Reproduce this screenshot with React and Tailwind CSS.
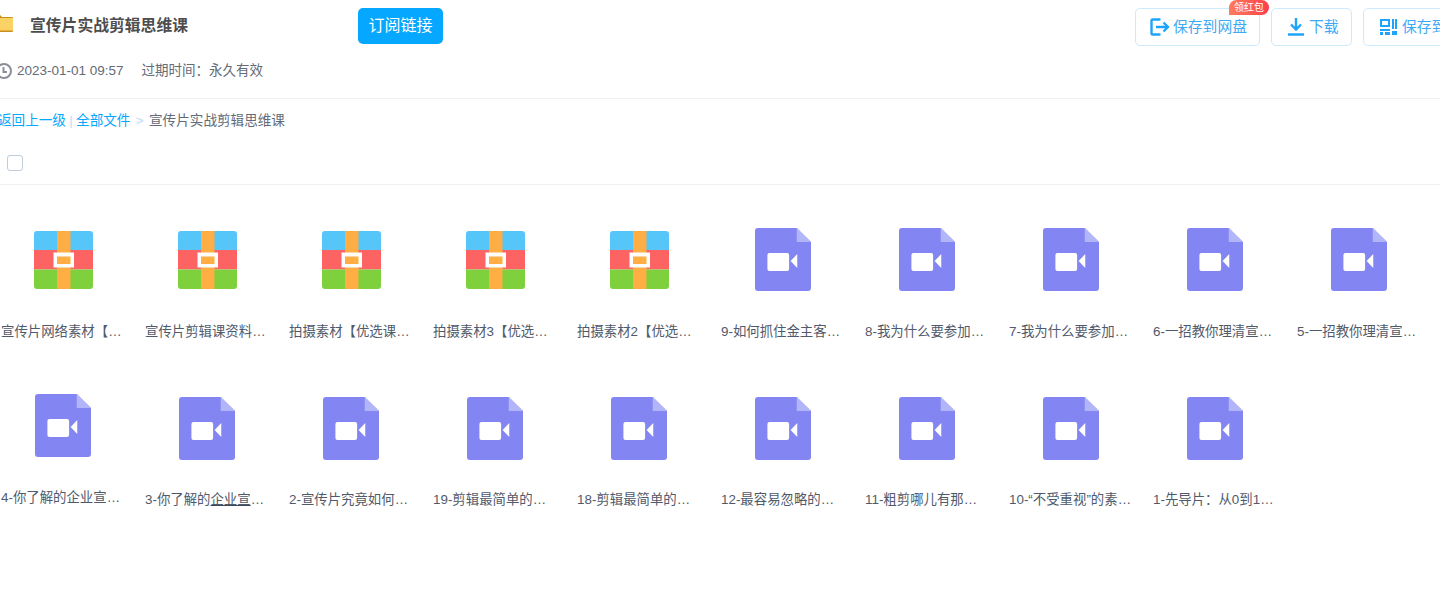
const row1 = [
  { type: 'zip', name: '宣传片网络素材【优选课程】' },
  { type: 'zip', name: '宣传片剪辑课资料包合集' },
  { type: 'zip', name: '拍摄素材【优选课程资源】' },
  { type: 'zip', name: '拍摄素材3【优选课程资源】' },
  { type: 'zip', name: '拍摄素材2【优选课程资源】' },
  { type: 'video', name: '9-如何抓住金主客户的心理' },
  { type: 'video', name: '8-我为什么要参加这个课程' },
  { type: 'video', name: '7-我为什么要参加这个课程' },
  { type: 'video', name: '6-一招教你理清宣传片思路' },
  { type: 'video', name: '5-一招教你理清宣传片思路' },
]

const row2 = [
  { type: 'video', tight: true, name: '4-你了解的企业宣传片是什么', lift: true },
  { type: 'video', tight: true, name: '3-你了解的', underlined: '企业宣', rest: '传片是什么' },
  { type: 'video', tight: true, name: '2-宣传片究竟如何去策划' },
  { type: 'video', tight: true, name: '19-剪辑最简单的方法与技巧' },
  { type: 'video', tight: true, name: '18-剪辑最简单的方法与技巧' },
  { type: 'video', tight: true, name: '12-最容易忽略的细节问题' },
  { type: 'video', tight: true, name: '11-粗剪哪儿有那么简单呢' },
  { type: 'video', tight: true, name: '10-“不受重视”的素材整理' },
  { type: 'video', tight: true, name: '1-先导片：从0到1学会剪辑' },
]

function ZipIcon() {
  return (
    <svg width="59" height="58" viewBox="0 0 59 58" className="ml-px mt-[3px] block">
      <path d="M3 0h53a3 3 0 0 1 3 3v16H0V3a3 3 0 0 1 3-3z" fill="#56c5f7" />
      <rect y="19" width="59" height="19.500" fill="#fe6363" />
      <path d="M0 38.500h59V55a3 3 0 0 1-3 3H3a3 3 0 0 1-3-3z" fill="#7fd03d" />
      <rect x="23" width="13.500" height="58" fill="#feae42" />
      <rect x="19.500" y="21.500" width="20.500" height="15" fill="#fff" />
      <rect x="23" y="25.500" width="13.500" height="7.500" fill="#feae42" />
    </svg>
  )
}

function VideoIcon() {
  return (
    <svg width="56" height="63" viewBox="0 0 55 63" preserveAspectRatio="none" className="block">
      <path d="M3 0h38l14 14v46a3 3 0 0 1-3 3H3a3 3 0 0 1-3-3V3a3 3 0 0 1 3-3z" fill="#8386f2" />
      <path d="M41 0l14 14H41z" fill="#b3b5f9" />
      <rect x="12.200" y="25" width="21.300" height="18" rx="2" fill="#fff" />
      <path d="M35 33l6.500-7v14z" fill="#fff" />
    </svg>
  )
}

function FileItem({ type, name, underlined, rest, lift, tight }) {
  return (
    <div className="flex w-[144px] shrink-0 flex-col items-center">
      <div className={`flex h-[63px] w-full items-start justify-center ${lift ? '-translate-y-[3px]' : ''}`}>
        {type === 'zip' ? <ZipIcon /> : <VideoIcon />}
      </div>
      <p
        className={`w-[124px] truncate text-[13.4px] leading-[20px] text-[#505a6b] ${tight ? 'mt-[30px]' : 'mt-[31px]'} ${lift ? '-translate-y-[2px]' : ''}`}
      >
        {name}
        {underlined ? <span className="underline decoration-[#3f4a5c]">{underlined}</span> : null}
        {rest}
      </p>
    </div>
  )
}

function ActionButton({ icon, label, className }) {
  return (
    <button className={`flex h-[38px] shrink-0 items-center rounded-[5px] border border-[#cdeafe] bg-white text-[14.8px] text-[#3fa9f5] ${className}`}>
      {icon}
      <span className="whitespace-nowrap">{label}</span>
    </button>
  )
}

export default function App() {
  return (
    <div
      className="h-[591px] w-[1440px] overflow-hidden bg-white"
      style={{ fontFamily: '"Liberation Sans", "Noto Sans CJK SC", sans-serif' }}
    >
      <header className="h-[99px] border-b border-[#f0f2f5]">
        <div className="flex h-[54px] items-start">
          <svg width="20" height="17" viewBox="0 0 20 17" className="ml-[-7px] mt-[15px] shrink-0">
            <path d="M1 0h6l2 2h10a1 1 0 0 1 1 1v13a1 1 0 0 1-1 1H1a1 1 0 0 1-1-1V1a1 1 0 0 1 1-1z" fill="#c98f1f" />
            <path d="M0 3h20v12.500H0z" fill="#fbd365" />
          </svg>
          <h1 className="ml-[17px] mt-[15px] whitespace-nowrap text-[15.8px] font-bold leading-[22px] text-[#4d4d4d]">
            宣传片实战剪辑思维课
          </h1>
          <button className="ml-[170px] mt-[8px] h-[36px] w-[85px] shrink-0 rounded-[5px] bg-[#06a7ff] text-[16px] text-white">
            订阅链接
          </button>

          <div className="relative ml-[692px] mt-[8px] flex shrink-0 gap-[11px]">
            <span className="absolute left-[94px] top-[-8px] z-10 flex h-[15px] w-[40px] items-center justify-center rounded-tl-[8px] rounded-tr-[8px] rounded-br-[8px] bg-gradient-to-r from-[#ff7a5c] to-[#fb3d4a] text-[10px] text-white">
              领红包
            </span>
            <ActionButton
              className="w-[125px] pl-[14px]"
              label="保存到网盘"
              icon={
                <svg width="20" height="18" viewBox="0 0 20 18" fill="none" stroke="#1ea5fb" strokeWidth="2.400" className="mr-[3px] shrink-0">
                  <path d="M10.500 1.500H2.500a1 1 0 0 0-1 1v13a1 1 0 0 0 1 1h8" />
                  <path d="M6 9h12M13.500 4.500L18 9l-4.500 4.500" />
                </svg>
              }
            />
            <ActionButton
              className="w-[81px] pl-[15px]"
              label="下载"
              icon={
                <svg width="18" height="18" viewBox="0 0 18 18" fill="none" stroke="#1ea5fb" strokeWidth="2.400" className="mr-[4px] shrink-0">
                  <path d="M9 0v11M4 6.500l5 5 5-5M1 16.500h16" />
                </svg>
              }
            />
            <ActionButton
              className="w-[120px] pl-[16px]"
              label="保存到手机"
              icon={
                <svg width="17" height="16" viewBox="0 0 17 16" className="mr-[5px] shrink-0" fill="#1ea5fb">
                  <path d="M0 0h10v8H0zM2 2v4h6V2zM12 0h2v10h-2zM15 0h2v10h-2zM0 10h10v2H0zM0 13h3v3H0zM5 13h5v3H5zM12 12h5v4h-5z" fillRule="evenodd" />
                </svg>
              }
            />
          </div>
        </div>
        <div className="flex h-[32px] items-center pt-[2px] text-[13.5px] text-[#636b78]">
          <svg width="16" height="16" viewBox="0 0 16 16" fill="none" stroke="#8a8f99" strokeWidth="2" className="ml-[-4px] mr-[5px] shrink-0">
            <circle cx="8" cy="8" r="7" />
            <path d="M7.500 4v5H11" />
          </svg>
          <span>2023-01-01 09:57</span>
          <span className="ml-[18px]">过期时间：永久有效</span>
        </div>
      </header>

      <nav className="flex h-[42px] items-center pt-[2px] text-[13.6px] text-[#06a7ff]">
        <a className="ml-[-2px]">返回上一级</a>
        <span className="mx-[3.300px] text-[#c4d8f2]">|</span>
        <a>全部文件</a>
        <span className="mx-[5.300px] text-[#c4d8f2]">&gt;</span>
        <span className="text-[#636b78]">宣传片实战剪辑思维课</span>
      </nav>

      <div className="flex h-[44px] items-center border-b border-[#f0f2f5]">
        <span className="ml-[7px] h-[16px] w-[16px] rounded-[3px] border border-[#bfccd9] bg-white" />
      </div>

      <section className="ml-[-9px] mt-[43px] flex w-[1449px] flex-col gap-[55px]">
        {[row1, row2].map((row, i) => (
          <div key={i} className="flex">
            {row.map((file) => (
              <FileItem key={file.name} {...file} />
            ))}
          </div>
        ))}
      </section>
    </div>
  )
}
